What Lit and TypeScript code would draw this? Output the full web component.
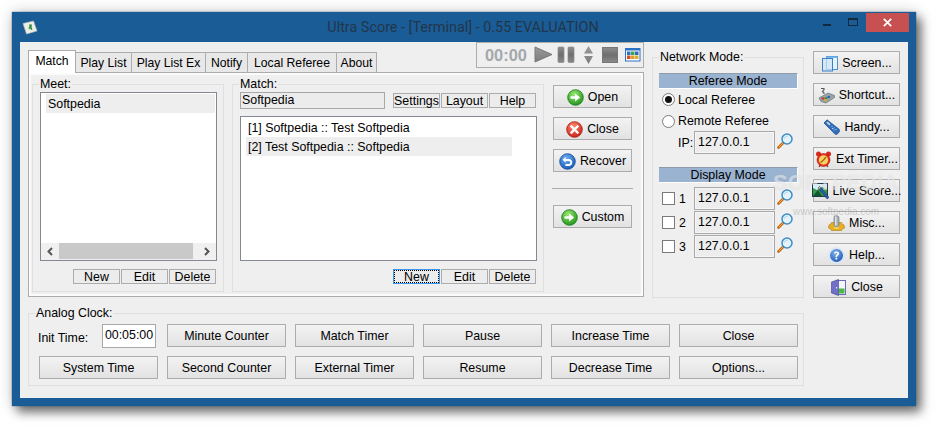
import { LitElement, html, svg, css } from "lit";
import { customElement } from "lit/decorators.js";

const ball = (id: string, a: string, b: string, edge: string, glyph: unknown) => html`
  <svg class="ic" viewBox="0 0 17 17">
    <defs><radialGradient id=${id} cx=".42" cy=".3" r=".8"><stop offset="0" stop-color=${a}/><stop offset="1" stop-color=${b}/></radialGradient></defs>
    <circle cx="8.5" cy="8.5" r="7.8" fill=${"url(#" + id + ")"} stroke=${edge} stroke-width=".8"/>
    ${glyph}
  </svg>`;

const ARROW = svg`<path d="M3.500 7.200h4.600V4.400l5 4.100-5 4.100V9.800H3.500z" fill="#fff"/>`;

const ICONS: Record<string, unknown> = {
  open: ball("g-open", "#9be870", "#138a12", "#177a18", ARROW),
  custom: ball("g-custom", "#9be870", "#138a12", "#177a18", ARROW),
  close: ball("g-close", "#ff8a70", "#c8140c", "#a81810", svg`<path d="M5.500 5.500l6 6M11.500 5.500l-6 6" stroke="#fff" stroke-width="2.400" stroke-linecap="square"/>`),
  recover: ball("g-rec", "#6fb0f0", "#0e4fb4", "#12489a", svg`<path d="M6.600 3.800L3.600 6.800l3 3V8h2.800c1.300 0 1.900.7 1.900 1.500S10.700 11 9.400 11H6.500v1.900h3.100c2.400 0 3.600-1.500 3.600-3.400S12 6 9.600 6H6.600z" fill="#fff"/>`),
  help: html`<svg class="ic" viewBox="0 0 17 17">
    <defs><radialGradient id="g-help" cx=".42" cy=".3" r=".8"><stop offset="0" stop-color="#7cb4ee"/><stop offset="1" stop-color="#1a50b0"/></radialGradient></defs>
    <circle cx="8.500" cy="8.500" r="8.300" fill="#dbe6f6"/><circle cx="8.500" cy="8.500" r="6.500" fill="url(#g-help)"/>
    <path d="M6 6.600C6 5 7.200 4.400 8.600 4.400c1.500 0 2.600.8 2.600 2.100 0 1.900-2.100 1.800-2.100 3.500H7.500c0-2.300 1.900-2.300 1.900-3.400 0-.5-.4-.9-.9-.9-.6 0-.9.4-1 .9z" fill="#fff"/><rect x="7.500" y="10.800" width="1.700" height="1.700" fill="#fff"/>
  </svg>`,
  screen: html`<svg class="ic" viewBox="0 0 17 17">
    <rect x="5.500" y="1.500" width="11" height="13" fill="#e6f2fc" stroke="#4a94d8"/>
    <rect x="1.500" y="3.500" width="10" height="12.500" fill="#cfe6f8" fill-opacity=".7" stroke="#3a80c8"/>
    <rect x="5.500" y="1.500" width="11" height="1.500" fill="#7ab8ea"/>
  </svg>`,
  shortcut: html`<svg class="ic" viewBox="0 0 17 17">
    <path d="M1 11l9-5 6.500 2.500v2L8 16l-5-1.500z" fill="#9aa3a8" stroke="#5c6468" stroke-width=".6"/>
    <path d="M3 1.500h3v1.300L4.500 4.500 6 6v1" fill="none" stroke="#555" stroke-width="1.100"/>
    <rect x="3.500" y="10.500" width="3" height="2" fill="#c43a2a"/><rect x="7" y="10" width="2.500" height="2" fill="#3a9a3a"/><rect x="9.500" y="9" width="2.500" height="2" fill="#2a62b8"/><rect x="6" y="12.500" width="3" height="1.500" fill="#d8b02a"/>
  </svg>`,
  handy: html`<svg class="ic" viewBox="0 0 17 17">
    <path d="M1 4l3-3.200 12 9.400c.8.700.8 1.800.1 2.700l-1.500 1.900c-.7.800-1.800.9-2.600.3z" fill="#2f6fc0" stroke="#123f78" stroke-width=".7"/>
    <path d="M3 3.800l1.500-1.500 3.400 2.800-1.500 1.700z" fill="#bfe0f4" stroke="#123f78" stroke-width=".4"/>
    <path d="M8.500 8l1-1M10.500 9.500l1-1M12.500 11l1-1M9 10l1-1M11 11.500l1-1" stroke="#bcd6f0" stroke-width=".9"/>
  </svg>`,
  timer: html`<svg class="ic" viewBox="0 0 17 17">
    <circle cx="3.500" cy="3" r="2.500" fill="#d8281c"/><circle cx="13.500" cy="3" r="2.500" fill="#d8281c"/>
    <path d="M4 15.800l1.500-2M13 15.800l-1.500-2" stroke="#8a2a14" stroke-width="1.300"/>
    <circle cx="8.500" cy="9" r="6.500" fill="#e82f1e" stroke="#9c1e10" stroke-width=".6"/>
    <circle cx="8.500" cy="9" r="4.700" fill="#f8d060"/>
    <path d="M8.500 9l2.500-3M8.500 9L5.500 11.500" stroke="#a06010" stroke-width="1.200"/>
  </svg>`,
  live: html`<svg class="ic" viewBox="0 0 17 17">
    <rect x=".5" y=".5" width="15" height="13" fill="#3a9a4a" stroke="#1e3a4e"/>
    <path d="M1 1h14v5.500L10 4 5 7 1 5z" fill="#d8ecf4"/>
    <path d="M1 13l5-6 4 6z" fill="#0f5a2a"/>
    <path d="M6 5l1.800-1.500 8.700 10.200c.5.900-.5 2.500-1.800 1.800z" fill="#2a5fae" stroke="#16305e" stroke-width=".6"/>
    <path d="M6 5l1.800-1.500 1 1.200L7 6.200z" fill="#d0b090"/>
  </svg>`,
  misc: html`<svg class="ic" viewBox="0 0 17 17">
    <path d="M1 10l2-1 .5-1.500h10l.5 1.500 2 1 .5 3-2 .8-1 1.700h-10l-1-1.700-2-.8z" fill="#e8b020" stroke="#a87810" stroke-width=".6"/>
    <circle cx="8.500" cy="11.500" r="2.500" fill="#f6d868"/>
    <rect x="6" y=".8" width="5" height="11" rx="2" fill="#a8aeb2" stroke="#666e74" stroke-width=".6"/>
    <rect x="7" y="1.500" width="1.500" height="9" fill="#dfe3e6"/>
  </svg>`,
  door: html`<svg class="ic" viewBox="0 0 17 17">
    <rect x="7" y="1.500" width="8.500" height="14" fill="#f4f6f8" stroke="#6a6ab8"/>
    <rect x="8.500" y="9.500" width="6" height="5" fill="#4cb848"/>
    <path d="M1.500 3L8.500.5v16l-7-2.500z" fill="#7070c8" stroke="#40408c" stroke-width=".6"/>
    <rect x="6" y="8" width="1.200" height="1.500" fill="#e8e8ff"/>
  </svg>`,
};

const LENS = html`<svg class="lens" viewBox="0 0 16 16">
  <path d="M1.500 14.500L6.500 9.500" stroke="#c06a18" stroke-width="2.600" stroke-linecap="round"/>
  <path d="M1.800 14.200L6 10" stroke="#f6a84c" stroke-width="1"/>
  <circle cx="10" cy="6" r="5" fill="#e4f2fb" stroke="#3a8ec8" stroke-width="1.500"/>
  <path d="M7.500 5.500C8 4 9 3.300 10.500 3.200" fill="none" stroke="#9cc8e6" stroke-width="1"/>
</svg>`;

const CHEV_L = html`<svg class="chev" viewBox="0 0 8 9"><path d="M6 1L2.500 4.500 6 8" fill="none" stroke="#555" stroke-width="2"/></svg>`;
const CHEV_R = html`<svg class="chev" viewBox="0 0 8 9"><path d="M2 1l3.500 3.500L2 8" fill="none" stroke="#555" stroke-width="2"/></svg>`;

@customElement("app-root")
export class AppRoot extends LitElement {
  static styles = css`
    :host { display: block; width: 936px; height: 426px; box-sizing: border-box; padding: 12px 20px 20px 12px; background: #fff; overflow: hidden; position: relative;
      font: 12.4px "Liberation Sans", Arial, sans-serif; color: #000; }
    * { box-sizing: border-box; }
    .window { width: 904px; height: 394px; background: #1a5c96; display: flex; flex-direction: column; box-shadow: 0 0 1px #14487c, 5px 6px 10px rgba(0,0,0,.55), 0 0 14px rgba(0,0,0,.18); }
    .titlebar { height: 30px; flex: none; display: grid; grid-template-columns: 1fr auto 1fr; align-items: center; }
    .appicon { width: 16px; height: 15px; margin-left: 10px; }
    .title { font: 14.4px Roboto, "Open Sans", sans-serif; color: #22364a; margin-left: -2px; white-space: nowrap; }
    .controls { justify-self: end; align-self: start; display: flex; margin-top: 1px; margin-right: 7px; }
    .ctl { width: 26px; height: 19px; display: flex; justify-content: center; }
    .ctl.min i { display: block; width: 8px; height: 2px; background: #15293c; margin-top: 11px; }
    .ctl.max i { display: block; width: 10px; height: 8px; border: 1px solid #15293c; border-top-width: 2px; margin-top: 5px; }
    .ctl.x { width: 43px; background: #c75050; align-items: center; }
    .ctl.x svg { width: 9px; height: 9px; }
    .client { margin: 0 8px 8px; height: 356px; background: #efefef; padding: 0 8px; display: flex; flex-direction: column; }
    .top { display: flex; height: 256px; flex: none; }
    .left { width: 616px; flex: none; display: flex; flex-direction: column; }
    .head { height: 30px; display: flex; align-items: flex-end; position: relative; }
    .tabs { display: flex; align-items: flex-end; }
    .tab { height: 20px; border: 1px solid #acacac; border-bottom: 0; border-left-width: 0; background: #e8e8e8; display: flex; align-items: center; justify-content: center; white-space: nowrap; padding-top: 1px; font-size: 12.2px; }
    .tab:nth-child(1) { width: 48px; height: 23px; background: #fff; border-left-width: 1px; margin-bottom: -1px; position: relative; z-index: 1; padding: 0 0 3px; }
    .tab:nth-child(2) { width: 56px; }
    .tab:nth-child(3) { width: 74px; }
    .tab:nth-child(4) { width: 42px; }
    .tab:nth-child(5) { width: 89px; }
    .tab:nth-child(6) { width: 40px; }
    .player { margin-left: auto; align-self: flex-start; width: 168px; height: 26px; border: 1px solid #acacac; display: flex; align-items: center; padding-left: 8px; }
    .time { font: bold 16.4px "Liberation Sans", Arial, sans-serif; color: #a3a8ac; width: 49px; flex: none; }
    .pctl { width: 108px; height: 20px; flex: none; }
    .panel { height: 225px; border: 1px solid #acacac; box-shadow: inset 0 0 0 2px #fbfbfb; background: #efefef; padding: 4px 3px; display: flex; }
    fieldset { margin: 0; min-width: 0; border: 1px solid #dfdfdf; }
    legend { padding: 0 1px; margin-left: -1px; line-height: 15px; height: 15px; white-space: nowrap; }
    .meet { width: 192px; padding: 0 6px 0 7px; flex: none; }
    .match { width: 312px; margin-left: 8px; padding: 0 6px 0 7px; flex: none; }
    .list { background: #fff; border: 1px solid #848890; display: flex; flex-direction: column; }
    .meet .list { height: 169px; width: 177px; }
    .match .list { height: 145px; width: 297px; }
    .items { flex: 1; padding: 1px 1px 0 5px; }
    .row { height: 19px; line-height: 20px; padding-left: 2px; white-space: nowrap; }
    .row.sel { background: #eeeeee; }
    .match .row { width: 266px; }
    .hbar { height: 17px; background: #f0f0f0; display: flex; align-items: center; padding: 0 0 1px 5px; }
    .chev { width: 8px; height: 9px; flex: none; }
    .thumb { width: 134px; height: 16px; background: #c9c9c9; margin-left: 5px; margin-right: 10px; flex: none; }
    .smallrow { display: flex; gap: 1px; justify-content: flex-end; margin: 8px 1px 0 0; }
    .small { width: 47px; height: 15px; border: 1px solid #acacac; background: #ececec; display: flex; align-items: center; justify-content: center; line-height: 15px; padding-top: 1px; }
    .small.focus { border-color: #3c96ee; outline: 1px dotted #000; outline-offset: -2px; }
    .matchtop { display: flex; height: 24px; align-items: flex-start; }
    .namefield { width: 145px; height: 17px; border: 1px solid #a8a8a8; background: #ececec; line-height: 15px; padding-left: 1px; flex: none; }
    .matchtop .smallrow { margin: 1px 0 0 8px; }
    .actions { width: 81px; margin: 8px 0 0 8px; display: flex; flex-direction: column; gap: 9px; flex: none; align-items: center; }
    .actions .btn { width: 79px; }
    .sep { width: 81px; height: 1px; background: #acacac; margin: 7px 0; }
    .btn { height: 23px; border: 1px solid #acacac; background: linear-gradient(#f3f3f3, #e2e2e2); display: flex; align-items: center; justify-content: center; gap: 4px; white-space: nowrap; padding: 1px 0 0; }
    .ic { width: 17px; height: 17px; flex: none; }
    .net { width: 152px; height: 248px; margin: 8px 0 0 8px; padding: 8px 5px 0 6px; flex: none; }
    .net legend { margin-left: 0; }
    .band { height: 15px; width: 139px; background: #9ab3d1; border-top: 1px solid #8d9bab; border-right: 1px solid #fff; text-align: center; line-height: 15px; box-shadow: 0 1px 0 #fff; }
    .radio { display: flex; align-items: center; gap: 3px; padding: 1px 0 0 3px; height: 22px; }
    .radio.second { height: 21px; }
    .dot { width: 13px; height: 13px; border-radius: 50%; border: 1px solid #7a7a7a; background: #fff; flex: none; display: flex; align-items: center; justify-content: center; }
    .dot i { display: block; width: 7px; height: 7px; border-radius: 50%; background: #111; }
    .iprow { display: flex; align-items: center; height: 23px; }
    .ipl { margin-left: 19px; width: 16px; flex: none; }
    .ip { width: 81px; height: 23px; border: 1px solid #a8a8a8; background: #ededed; box-shadow: inset 0 0 0 1px #f6f6f6; padding-left: 3px; line-height: 20px; flex: none; }
    .lens { width: 16px; height: 16px; margin: -4px 0 0 2px; flex: none; }
    .band.second { margin-top: 13px; margin-bottom: 5px; }
    .chkrow { display: flex; align-items: center; height: 23px; margin-bottom: 1px; }
    .chk { width: 13px; height: 13px; border: 1px solid #7a7a7a; background: #fff; margin-left: 3px; flex: none; }
    .num { width: 19px; padding-left: 4px; flex: none; }
    .side { width: 87px; margin: 9px 0 0 9px; display: flex; flex-direction: column; gap: 9px; flex: none; }
    .clock { width: 776px; height: 80px; margin-top: 8px; padding: 3px 5px 0 10px; flex: none; }
    .clock legend { margin-left: -4px; }
    .grid { display: grid; grid-template-columns: repeat(6, 119px); grid-auto-rows: 23px; gap: 9px; }
    .init { display: flex; align-items: center; padding-right: 2px; }
    .init span { margin-left: -1px; padding-top: 4px; }
    .timebox { margin-left: auto; width: 54px; height: 24px; border: 1px solid #a8a8a8; background: #fff; text-align: center; line-height: 21px; flex: none; }
    .mark { position: absolute; left: 773px; top: 170px; pointer-events: none; }
    .mark b { display: block; font: bold 22px "Liberation Sans", Arial, sans-serif; color: rgba(255,255,255,.45); text-shadow: 0 0 1px rgba(170,170,170,.35); line-height: 26px; }
    .mark span { display: block; font-size: 10px; color: rgba(140,140,140,.4); line-height: 14px; margin-top: 9px; margin-left: 20px; }
  `;

  private smallBtns(labels: string[], focus = -1) {
    return html`<div class="smallrow">${labels.map((l, i) => html`<div class="small ${i === focus ? "focus" : ""}">${l}</div>`)}</div>`;
  }

  private btn(label: string, icon?: string) {
    return html`<div class="btn">${icon ? ICONS[icon] : ""}<span>${label}</span></div>`;
  }

  render() {
    const side: [string, string][] = [["Screen...", "screen"], ["Shortcut...", "shortcut"], ["Handy...", "handy"], ["Ext Timer...", "timer"], ["Live Score...", "live"], ["Misc...", "misc"], ["Help...", "help"], ["Close", "door"]];
    return html`
      <div class="window">
        <div class="titlebar">
          <svg class="appicon" viewBox="0 0 16 15">
            <path d="M1 3.500L11.500 1 15 11 4.500 14z" fill="#eceee8" stroke="#b8bcb4" stroke-width=".6"/>
            <path d="M7 4.500h3L9.500 7l1 2.500-1.500.5-1-2-1 1.500L6.500 8l1-1.500z" fill="#2c8a3c"/>
          </svg>
          <div class="title">Ultra Score - [Terminal] - 0.55 EVALUATION</div>
          <div class="controls">
            <div class="ctl min"><i></i></div>
            <div class="ctl max"><i></i></div>
            <div class="ctl x"><svg viewBox="0 0 9 9"><path d="M.8.800l7.400 7.400M8.200.800L.8 8.200" stroke="#fff" stroke-width="1.700"/></svg></div>
          </div>
        </div>
        <div class="client">
          <div class="top">
            <div class="left">
              <div class="head">
                <div class="tabs">
                  ${["Match", "Play List", "Play List Ex", "Notify", "Local Referee", "About"].map((t) => html`<div class="tab">${t}</div>`)}
                </div>
                <div class="player">
                  <span class="time">00:00</span>
                  <svg class="pctl" viewBox="0 0 108 20">
                    <defs><linearGradient id="g-p" x1="0" y1="0" x2="0" y2="1"><stop offset="0" stop-color="#9a9a9a"/><stop offset="1" stop-color="#7c7c7c"/></linearGradient>
                    <linearGradient id="g-s" x1="0" y1="0" x2="0" y2="1"><stop offset="0" stop-color="#8e8e8e"/><stop offset=".5" stop-color="#6e6e6e"/><stop offset="1" stop-color="#8a8a8a"/></linearGradient></defs>
                    <path d="M1 2v15l17-7.500z" fill="url(#g-p)" stroke="#7a7a7a"/>
                    <rect x="24" y="2" width="6" height="15.500" rx="1" fill="url(#g-s)" stroke="#8a8a8a" stroke-width=".7"/>
                    <rect x="34" y="2" width="6" height="15.500" rx="1" fill="url(#g-s)" stroke="#8a8a8a" stroke-width=".7"/>
                    <path d="M54.500 1l4.500 7.500h-9zM54.500 19L50 11h9z" fill="url(#g-p)"/>
                    <rect x="68.500" y="2.500" width="15" height="15" fill="url(#g-s)" stroke="#777"/>
                    <rect x="91.500" y="3.500" width="14.500" height="12.500" fill="#fff" stroke="#2a72c4"/>
                    <rect x="91" y="3" width="15" height="2.500" fill="#2a72c4"/>
                    <rect x="93" y="6.500" width="3.500" height="3.500" fill="#2a70d0"/><rect x="97" y="6.500" width="3.500" height="3.500" fill="#38a848"/><rect x="101" y="6.500" width="3.500" height="3.500" fill="#3a68c0"/>
                    <rect x="93" y="10.500" width="3.500" height="3.500" fill="#d84a2a"/><rect x="97" y="10.500" width="3.500" height="3.500" fill="#e0a020"/><rect x="101" y="10.500" width="3.500" height="3.500" fill="#d8b030"/>
                  </svg>
                </div>
              </div>
              <div class="panel">
                <fieldset class="meet">
                  <legend>Meet:</legend>
                  <div class="list">
                    <div class="items"><div class="row sel">Softpedia</div></div>
                    <div class="hbar">${CHEV_L}<div class="thumb"></div>${CHEV_R}</div>
                  </div>
                  ${this.smallBtns(["New", "Edit", "Delete"])}
                </fieldset>
                <fieldset class="match">
                  <legend>Match:</legend>
                  <div class="matchtop">
                    <div class="namefield">Softpedia</div>
                    ${this.smallBtns(["Settings", "Layout", "Help"])}
                  </div>
                  <div class="list">
                    <div class="items">
                      <div class="row">[1] Softpedia :: Test Softpedia</div>
                      <div class="row sel">[2] Test Softpedia :: Softpedia</div>
                    </div>
                  </div>
                  ${this.smallBtns(["New", "Edit", "Delete"], 0)}
                </fieldset>
                <div class="actions">
                  ${this.btn("Open", "open")}
                  ${this.btn("Close", "close")}
                  ${this.btn("Recover", "recover")}
                  <div class="sep"></div>
                  ${this.btn("Custom", "custom")}
                </div>
              </div>
            </div>
            <fieldset class="net">
              <legend>Network Mode:</legend>
              <div class="band">Referee Mode</div>
              <div class="radio"><span class="dot"><i></i></span>Local Referee</div>
              <div class="radio second"><span class="dot"></span>Remote Referee</div>
              <div class="iprow"><span class="ipl">IP:</span><div class="ip">127.0.0.1</div>${LENS}</div>
              <div class="band second">Display Mode</div>
              ${[1, 2, 3].map((n) => html`<div class="chkrow"><span class="chk"></span><span class="num">${n}</span><div class="ip">127.0.0.1</div>${LENS}</div>`)}
            </fieldset>
            <div class="side">${side.map(([l, i]) => this.btn(l, i))}</div>
          </div>
          <fieldset class="clock">
            <legend>Analog Clock:</legend>
            <div class="grid">
              <div class="init"><span>Init Time:</span><div class="timebox">00:05:00</div></div>
              ${["Minute Counter", "Match Timer", "Pause", "Increase Time", "Close", "System Time", "Second Counter", "External Timer", "Resume", "Decrease Time", "Options..."].map((l) => this.btn(l))}
            </div>
          </fieldset>
        </div>
      </div>
      <div class="mark"><b>SOFTPEDIA</b><span>www.softpedia.com</span></div>
    `;
  }
}
